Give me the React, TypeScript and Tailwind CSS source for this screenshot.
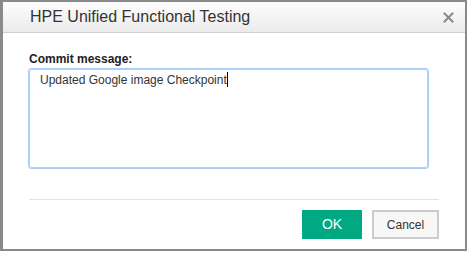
const font = { fontFamily: '"Liberation Sans", Arial, sans-serif' };

const CloseIcon: React.FC = () => (
    <svg width="11" height="11" viewBox="0 0 11 11" className="text-[#8a8a8a]">
        <path d="M1.5 1.5 L9.5 9.5 M9.5 1.5 L1.5 9.5" stroke="currentColor" strokeWidth="2" strokeLinecap="square" />
    </svg>
);

const CommitDialog: React.FC = () => {
    return (
        <div className="w-[468px] h-[253px] bg-white" style={font}>
            <div className="w-[467px] h-[251px] border-2 border-l-[3px] border-[#8a8a8a] bg-white flex flex-col">
                {/* header */}
                <div className="h-[31px] flex items-center justify-between pl-[27px] pr-[11px] bg-gradient-to-b from-[#fdfdfd] to-[#ebebeb] border-b border-[#cfcfcf]">
                    <h1 className="text-[16px] text-[#333] leading-none">HPE Unified Functional Testing</h1>
                    <CloseIcon />
                </div>

                {/* body */}
                <div className="pl-[26px] pr-[25px] flex flex-col">
                    <label className="mt-[19px] mb-[3px] text-[12px] leading-[14px] font-bold text-[#222]">Commit message:</label>
                    <div className="w-[399px] h-[99px] rounded-[3px] border border-[#c4cfdc] shadow-[0_0_0_1px_rgba(140,186,242,0.7),0_0_2px_rgba(102,163,239,0.4)] pl-[10px] pt-[2px] text-[12px] leading-[16px] text-[#333]">
                        Updated Google image Checkpoint
                        <span className="inline-block w-px h-[15px] bg-black align-[-3px]"></span>
                    </div>
                    <div className="mt-[31px] w-[410px] h-px bg-[#e3e3e3]"></div>
                    <div className="w-[410px] mt-[10px] flex justify-end gap-[10px]">
                        <button className="w-[60px] h-[29px] bg-[#01a982] text-white text-[14px]">OK</button>
                        <button className="w-[67px] h-[29px] bg-[#f7f7f7] border-2 border-[#cccccc] text-[#333] text-[12px]">Cancel</button>
                    </div>
                </div>
            </div>
        </div>
    );
};

export default function App() {
    return <CommitDialog />;
}
